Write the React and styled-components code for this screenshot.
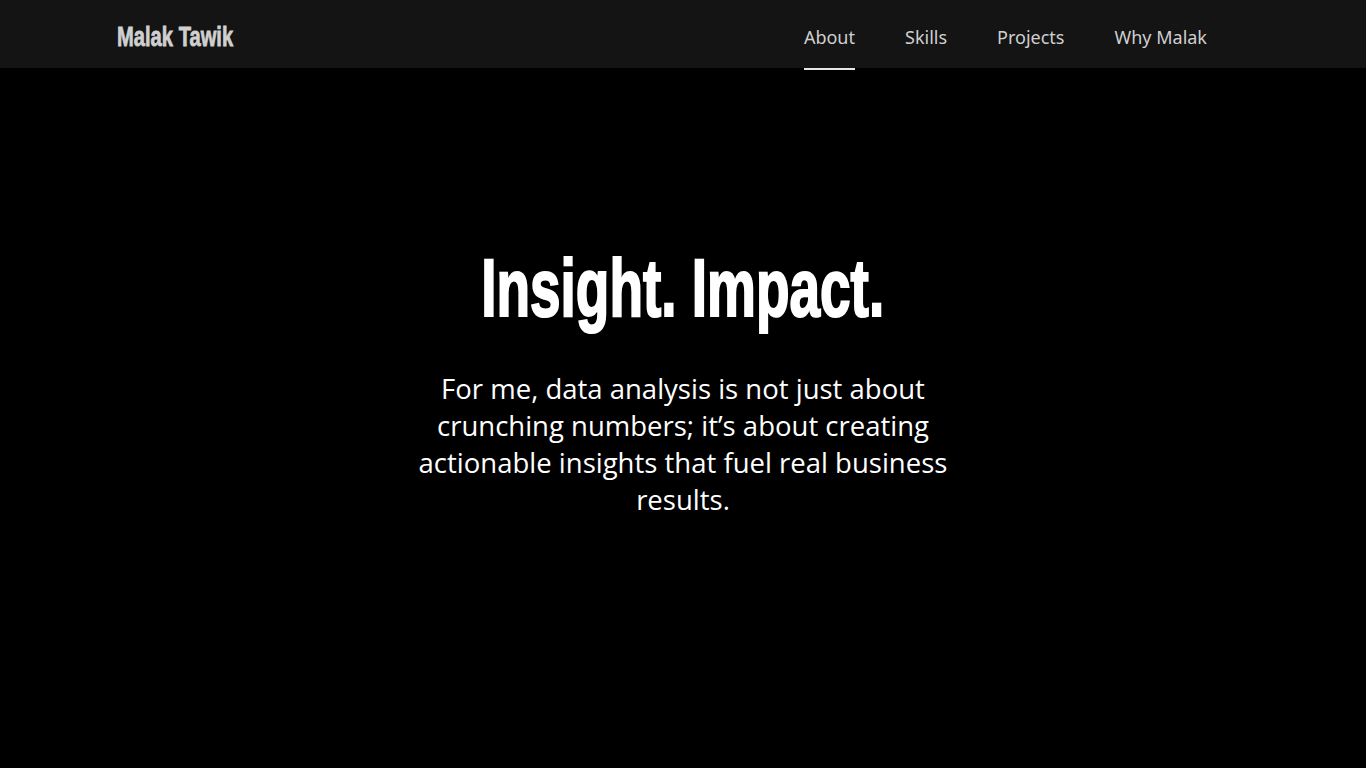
import React from "react";
import styled, { createGlobalStyle } from "styled-components";

const Global = createGlobalStyle`
  html, body { margin: 0; padding: 0; background: #000; }
  body { font-family: "Open Sans", "Noto Sans", sans-serif; }
  * { box-sizing: border-box; }
`;

const Page = styled.div`
  min-height: 768px;
  background: #000;
  display: flex;
  flex-direction: column;
`;

const Header = styled.header`
  height: 68px;
  background: #141414;
  display: flex;
  align-items: center;
  justify-content: space-between;
  padding: 0 159px 0 117px;
`;

const Logo = styled.a`
  display: inline-block;
  margin-top: 6px;
  font-family: "Liberation Sans", Arial, sans-serif;
  font-weight: 700;
  font-size: 28px;
  color: #d0d0d0;
  -webkit-text-stroke: 0.8px #d0d0d0;
  transform: scaleX(0.72);
  transform-origin: left center;
  text-decoration: none;
  white-space: nowrap;
`;

const Nav = styled.nav`
  display: flex;
  gap: 50px;
  height: 100%;
`;

const NavItem = styled.a`
  position: relative;
  display: flex;
  align-items: center;
  padding-top: 6px;
  font-family: "Noto Sans", "Open Sans", sans-serif;
  font-size: 18px;
  color: #cfcfcf;
  text-decoration: none;
  &::after {
    content: "";
    position: absolute;
    left: 0;
    right: 0;
    bottom: -2px;
    height: 2px;
    background: #e6e6e6;
    display: ${(p) => (p.$active ? "block" : "none")};
  }
`;

const Hero = styled.main`
  flex: 1;
  display: flex;
  flex-direction: column;
  align-items: center;
  padding-top: 170px;
`;

const Title = styled.h1`
  margin: 0;
  display: inline-block;
  font-family: "Liberation Sans", Arial, sans-serif;
  font-weight: 700;
  font-size: 82px;
  line-height: 100px;
  color: #fff;
  -webkit-text-stroke: 2.2px #fff;
  transform: scaleX(0.67);
  white-space: nowrap;
`;

const Lead = styled.p`
  margin: 32px 0 0;
  width: 580px;
  text-align: center;
  font-family: "Open Sans", "Noto Sans", sans-serif;
  font-size: 27.5px;
  line-height: 37px;
  color: #fff;
`;

export default function App() {
  const links = ["About", "Skills", "Projects", "Why Malak"];
  return (
    <Page>
      <Global />
      <Header>
        <Logo href="#">Malak Tawik</Logo>
        <Nav>
          {links.map((l, i) => (
            <NavItem key={l} href="#" $active={i === 0}>
              {l}
            </NavItem>
          ))}
        </Nav>
      </Header>
      <Hero>
        <Title>Insight. Impact.</Title>
        <Lead>
          For me, data analysis is not just about crunching numbers; it’s about
          creating actionable insights that fuel real business results.
        </Lead>
      </Hero>
    </Page>
  );
}
